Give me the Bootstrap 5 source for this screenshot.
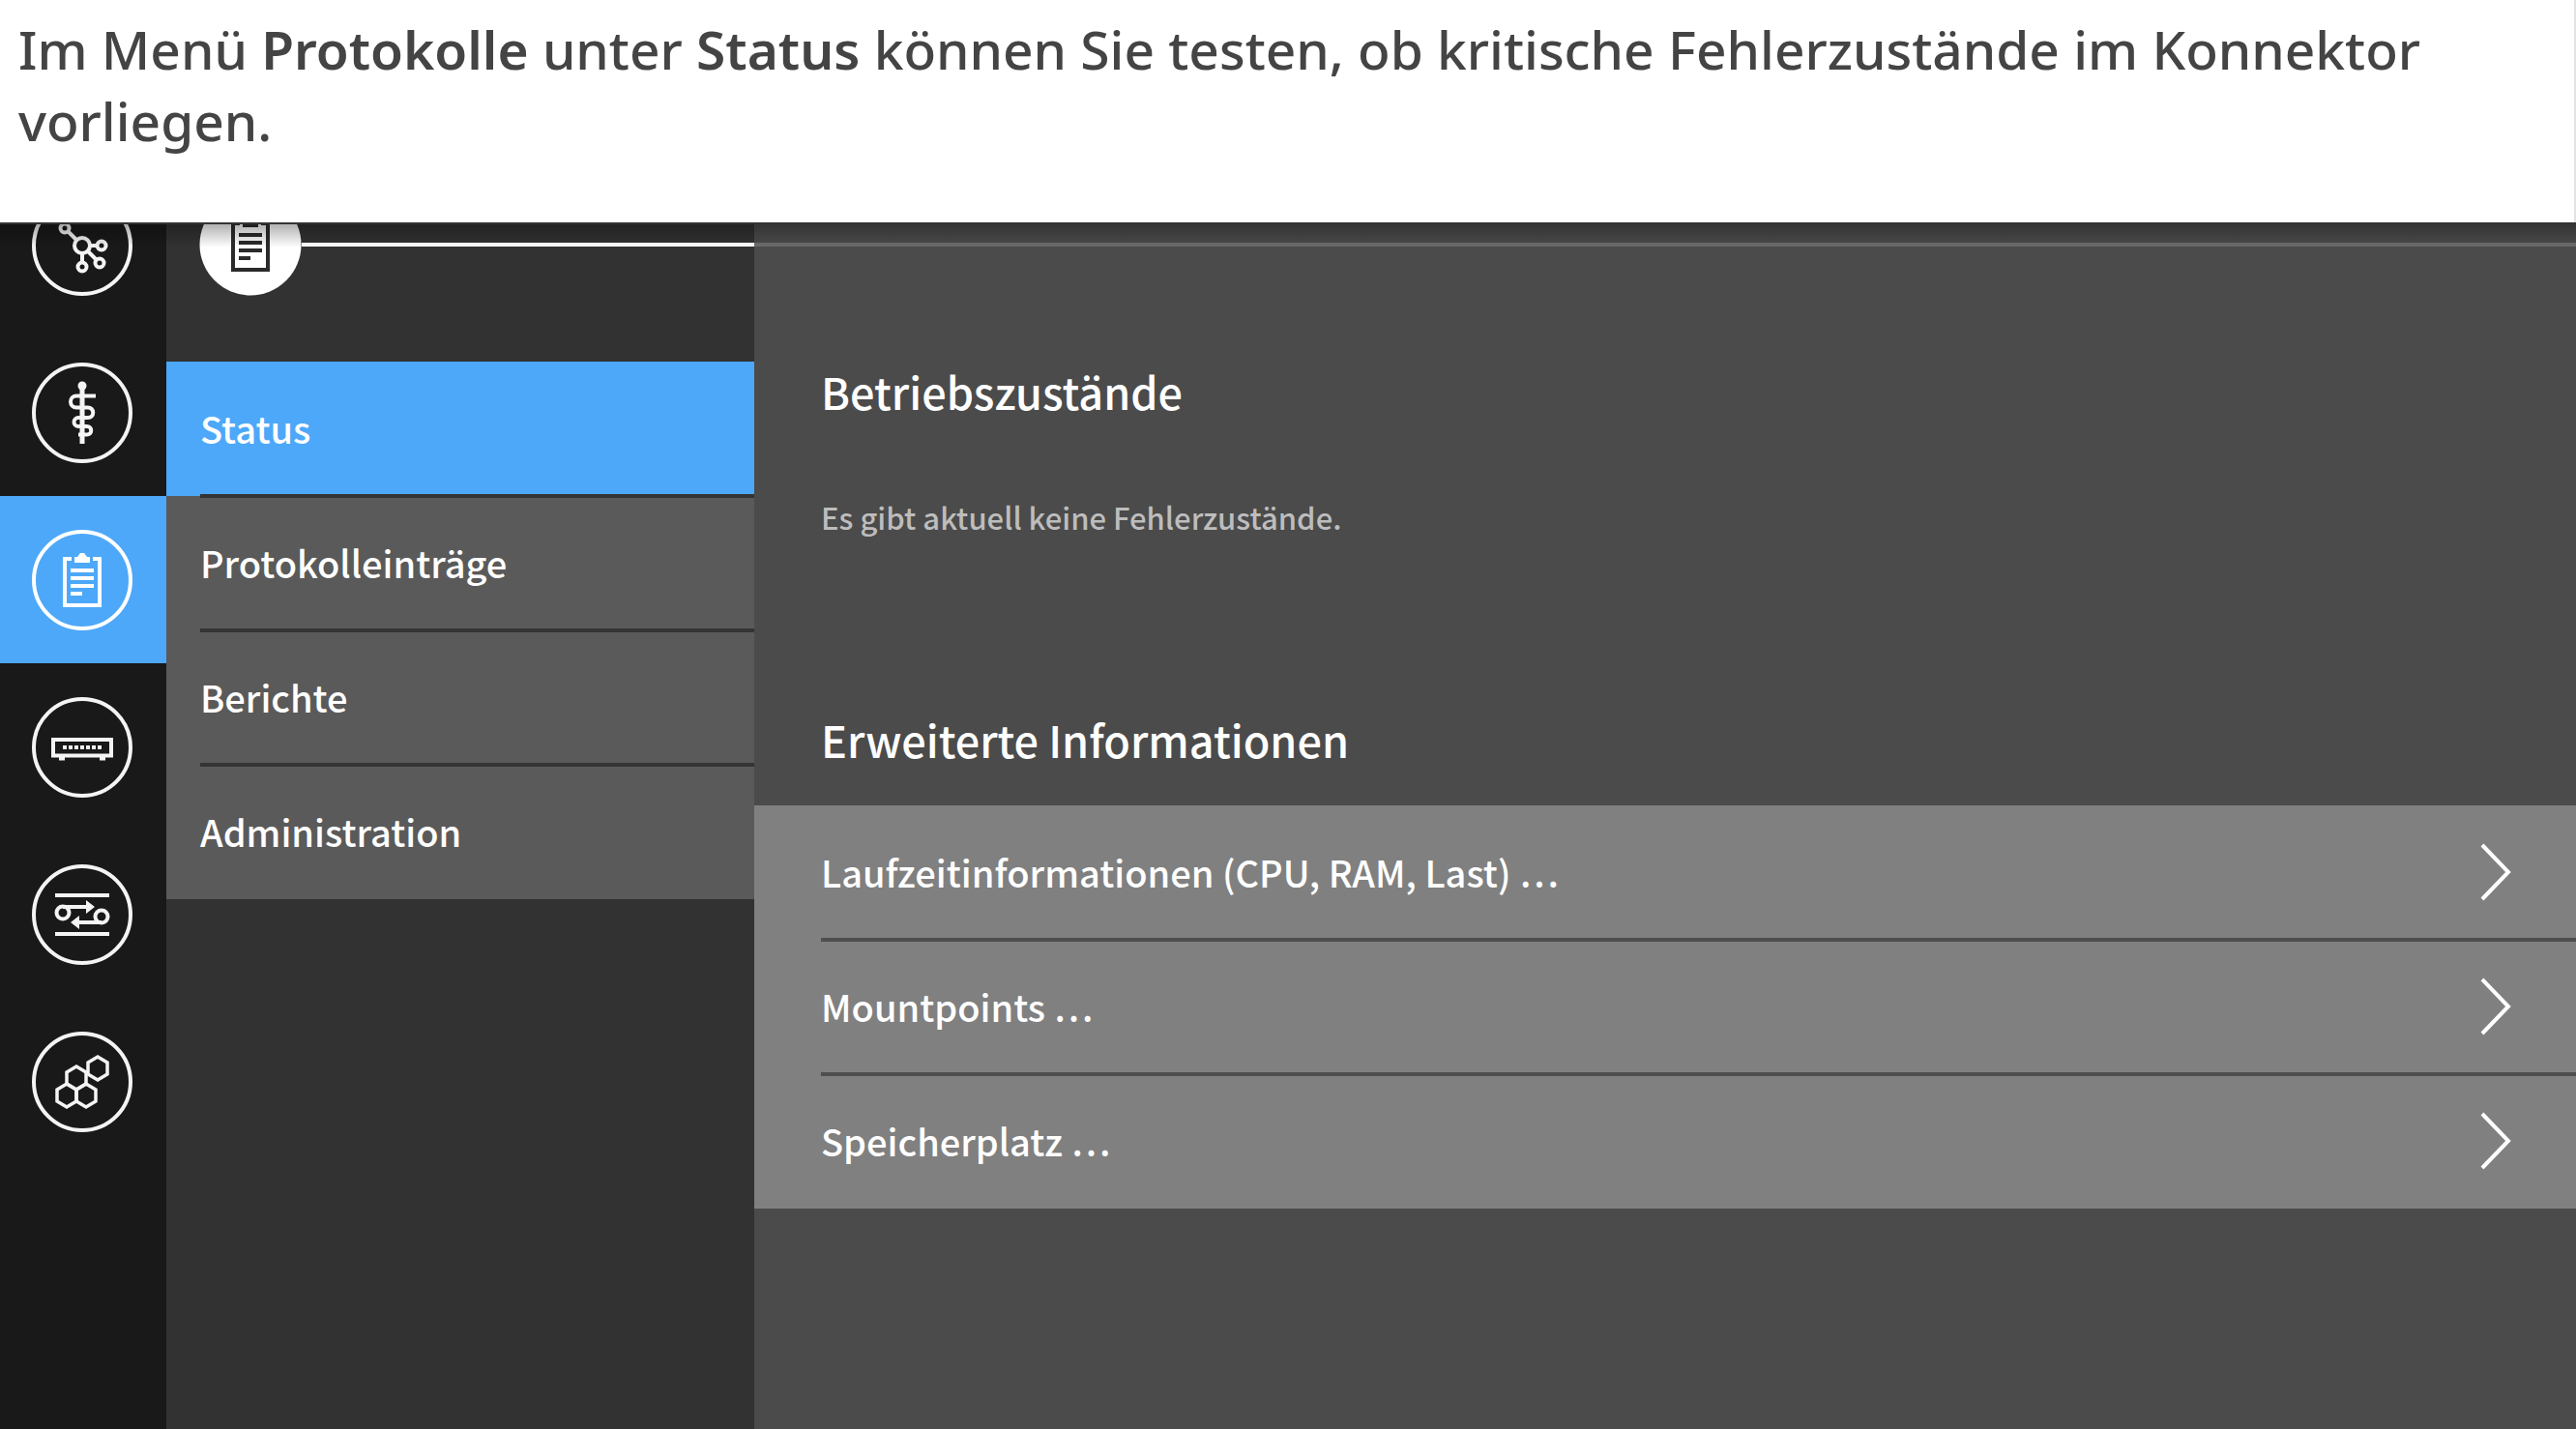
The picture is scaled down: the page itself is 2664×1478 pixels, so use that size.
<!DOCTYPE html>
<html lang="de">
<head>
<meta charset="utf-8">
<meta name="viewport" content="width=device-width, initial-scale=1">
<title>Protokolle – Status</title>
<link href="https://cdn.jsdelivr.net/npm/bootstrap@5.3.0/dist/css/bootstrap.min.css" rel="stylesheet">
<style>
  .intro { font-family: "Noto Sans", "Open Sans", sans-serif; font-size: 55px; font-weight: 500; line-height: 74px; color: #444; min-height: 230px; padding: 14px 100px 0 19px; border-right: 2px solid #e3e3e3; }
  .intro strong { font-weight: 600; }
  .konnektor { font-family: "Noto Sans CJK SC", "Open Sans", sans-serif; font-weight: 500; background: #4b4b4b; color: #fff; }
  .konnektor::before { content: ""; position: absolute; inset: 0 0 auto 0; height: 26px; z-index: 5; background: linear-gradient(#333534 0 2px, rgba(0,0,0,.3) 2px, rgba(0,0,0,0)); }
  .rail { width: 172px; background: #191919; }
  .rail-icons { margin-top: -63px; }
  .rail-icons a { height: 173px; padding-right: 2px; color: #f4f4f4; }
  .rail-icons a.current { background: #4da8f9; color: #fff; }
  .round-icon { width: 106px; height: 106px; display: block; fill: none; stroke: currentColor; stroke-width: 4; }
  .side { width: 608px; background: #323232; }
  .side-head { height: 144px; padding-left: 34px; }
  .side-head .round-icon { margin-top: -30px; }
  .track { height: 4px; margin-top: 21px; background: #fff; }
  .track-dim { background: #6c6c6c; }
  .ruled { height: 139px; border: 0; color: #fff; font-size: 38px; line-height: 60px; z-index: 0; }
  .ruled + .ruled::before { content: ""; position: absolute; left: 35px; right: 0; top: -2px; height: 4px; background: #343434; }
  .side-menu .ruled { padding: 0 34px 2px 35px; background: #5a5a5a; }
  .side-menu .ruled.active { background: #4da8f9; margin: 0; z-index: 0; }
  .more-list { margin-top: 32px; }
  .more-list .ruled { padding: 0 67px 2px 69px; background: #808080; }
  .more-list .ruled + .ruled::before { left: 69px; background: #4e4e4e; }
  .pane h2 { font-size: 45px; line-height: 72px; font-weight: 500; margin: 0; padding-left: 69px; }
  .pane-status { padding-top: 114px; }
  .pane-status p { font-size: 31px; line-height: 50px; color: #bdbdbd; margin: 69px 0 0; padding-left: 69px; }
  .pane-more { padding-top: 169px; }
  .chevron { width: 32px; height: 60px; fill: none; stroke: #fff; stroke-width: 4; }
</style>
</head>
<body class="d-flex flex-column min-vh-100">
<p class="intro m-0">Im Menü <strong>Protokolle</strong> unter <strong>Status</strong> können Sie testen, ob kritische Fehlerzustände im Konnektor vorliegen.</p>

<main class="konnektor position-relative d-flex flex-grow-1 overflow-hidden">
  <nav class="rail flex-shrink-0" aria-label="Hauptmenü">
    <div class="rail-icons d-flex flex-column">
      <a href="#" class="d-flex align-items-center justify-content-center" aria-label="Netzwerk">
        <svg class="round-icon" viewBox="-53 -53 106 106"><circle r="50"/><circle r="8"/><circle cx="20" r="4.5"/><circle cx="18" cy="18" r="4.5"/><circle cy="22" r="4.5"/><circle cx="-18" cy="-18" r="4.5"/><path d="M8 0h7M6 6l8 8M0 8v9M-6-6l-8-8"/></svg>
      </a>
      <a href="#" class="d-flex align-items-center justify-content-center" aria-label="Praxis">
        <svg class="round-icon" viewBox="-53 -53 106 106"><circle r="50"/><circle cy="-28" r="4.5" fill="currentColor" stroke="none"/><path d="M0-28V32" stroke-width="5"/><path d="M14-17.500H-6a6 6 0 0 0 0 12H6a5 5 0 0 1 0 10.500H-4a4.500 4.500 0 0 0 0 9H5a4 4 0 0 1 0 8.500H-4"/></svg>
      </a>
      <a href="#" class="current d-flex align-items-center justify-content-center" aria-label="Protokolle" aria-current="page">
        <svg class="round-icon" viewBox="-53 -53 106 106"><circle r="50"/><path d="M-11-22H-18V26H18V-22H11M-12-10H12M-12-2H12M-12 6H12M-12 14H0"/><path d="M-8-18v-6h3l3-4h4l3 4h3v6z" fill="currentColor" stroke="none"/></svg>
      </a>
      <a href="#" class="d-flex align-items-center justify-content-center" aria-label="System">
        <svg class="round-icon" viewBox="-53 -53 106 106"><circle r="50"/><path d="M-30-8H30V8.500H-30z"/><path d="M-20 0H20" stroke-dasharray="4 2"/><path d="M-24 11.500h6M18 11.500h6"/></svg>
      </a>
      <a href="#" class="d-flex align-items-center justify-content-center" aria-label="Verbindungen">
        <svg class="round-icon" viewBox="-53 -53 106 106"><circle r="50"/><path d="M-28-20H28M-28 20H28M-20-8H6M20 8H-5"/><circle cx="-20" cy="-2" r="6.500"/><circle cx="20" cy="2" r="6.500"/><path d="M4-15v14l9-7zM-3 1v14l-9-7z" fill="currentColor" stroke="none"/></svg>
      </a>
      <a href="#" class="d-flex align-items-center justify-content-center" aria-label="Module">
        <svg class="round-icon" viewBox="-53 -53 106 106"><circle r="50"/><g stroke-width="3.500"><path d="M16-26l10 6v12l-10 6-10-6v-12z"/><path d="M-6-16l10 6v12l-10 6-10-6v-12z"/><path d="M-16 2l10 6v12l-10 6-10-6V8z"/><path d="M4 2l10 6v12l-10 6-10-6V8z"/></g></svg>
      </a>
    </div>
  </nav>

  <section class="side flex-shrink-0">
    <div class="side-head d-flex align-items-start">
      <svg class="round-icon flex-shrink-0" viewBox="-53 -53 106 106"><circle r="52.500" fill="#fff" stroke="none"/><g stroke="#2b2b2b"><path d="M-11-22H-18V26H18V-22H11M-12-10H12M-12-2H12M-12 6H12M-12 14H0"/><path d="M-8-18v-6h3l3-4h4l3 4h3v6z" fill="#2b2b2b" stroke="none"/></g></svg>
      <div class="track flex-grow-1"></div>
    </div>
    <div class="side-menu list-group list-group-flush rounded-0">
      <a href="#" class="ruled list-group-item active d-flex align-items-center">Status</a>
      <a href="#" class="ruled list-group-item d-flex align-items-center">Protokolleinträge</a>
      <a href="#" class="ruled list-group-item d-flex align-items-center">Berichte</a>
      <a href="#" class="ruled list-group-item d-flex align-items-center">Administration</a>
    </div>
  </section>

  <section class="pane flex-grow-1">
    <div class="d-flex"><div class="track track-dim flex-grow-1"></div></div>
    <div class="pane-status">
      <h2>Betriebszustände</h2>
      <p>Es gibt aktuell keine Fehlerzustände.</p>
    </div>
    <div class="pane-more">
      <h2>Erweiterte Informationen</h2>
      <div class="more-list list-group list-group-flush rounded-0">
        <a href="#" class="ruled list-group-item d-flex align-items-center justify-content-between">Laufzeitinformationen (CPU, RAM, Last) …<svg class="chevron" viewBox="0 0 32 60"><path d="M2 2l27 28L2 58"/></svg></a>
        <a href="#" class="ruled list-group-item d-flex align-items-center justify-content-between">Mountpoints …<svg class="chevron" viewBox="0 0 32 60"><path d="M2 2l27 28L2 58"/></svg></a>
        <a href="#" class="ruled list-group-item d-flex align-items-center justify-content-between">Speicherplatz …<svg class="chevron" viewBox="0 0 32 60"><path d="M2 2l27 28L2 58"/></svg></a>
      </div>
    </div>
  </section>
</main>
<script src="https://cdn.jsdelivr.net/npm/bootstrap@5.3.0/dist/js/bootstrap.bundle.min.js"></script>
</body>
</html>
